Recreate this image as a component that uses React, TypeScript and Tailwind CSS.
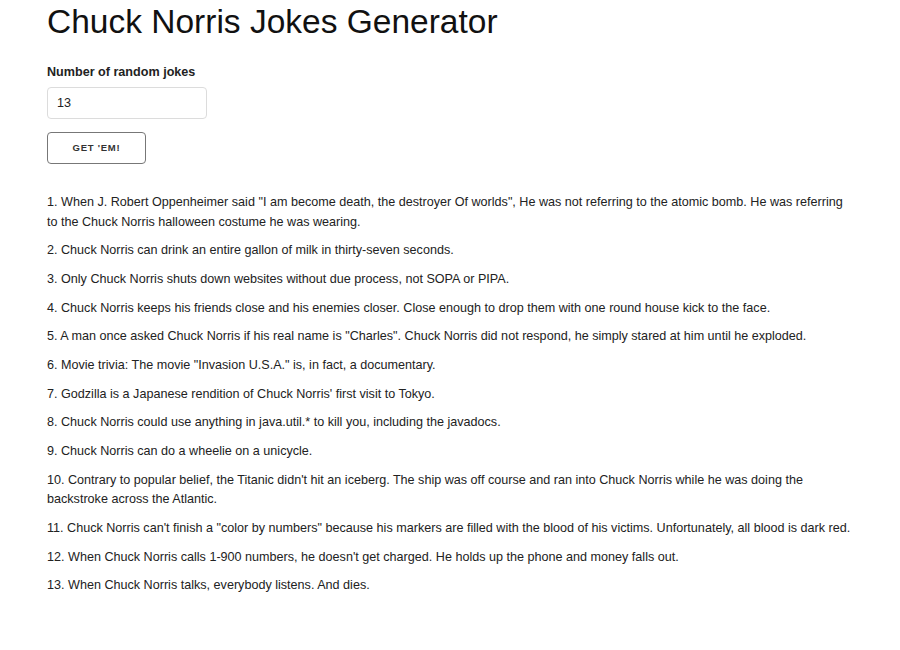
import React, { useState } from 'react';

const jokes = [
  'When J. Robert Oppenheimer said "I am become death, the destroyer Of worlds", He was not referring to the atomic bomb. He was referring to the Chuck Norris halloween costume he was wearing.',
  'Chuck Norris can drink an entire gallon of milk in thirty-seven seconds.',
  'Only Chuck Norris shuts down websites without due process, not SOPA or PIPA.',
  'Chuck Norris keeps his friends close and his enemies closer. Close enough to drop them with one round house kick to the face.',
  'A man once asked Chuck Norris if his real name is "Charles". Chuck Norris did not respond, he simply stared at him until he exploded.',
  'Movie trivia: The movie "Invasion U.S.A." is, in fact, a documentary.',
  "Godzilla is a Japanese rendition of Chuck Norris' first visit to Tokyo.",
  'Chuck Norris could use anything in java.util.* to kill you, including the javadocs.',
  'Chuck Norris can do a wheelie on a unicycle.',
  "Contrary to popular belief, the Titanic didn't hit an iceberg. The ship was off course and ran into Chuck Norris while he was doing the backstroke across the Atlantic.",
  'Chuck Norris can\'t finish a "color by numbers" because his markers are filled with the blood of his victims. Unfortunately, all blood is dark red.',
  "When Chuck Norris calls 1-900 numbers, he doesn't get charged. He holds up the phone and money falls out.",
  'When Chuck Norris talks, everybody listens. And dies.',
];

const App = () => {
  const [count, setCount] = useState('13');

  return (
    <div className="min-h-screen bg-white px-[47px] text-[#222] font-['Liberation_Sans',Arial,sans-serif]">
      <h1 className="pt-[1px] text-[33.5px] leading-[42px] font-normal text-[#111]">Chuck Norris Jokes Generator</h1>

      <form className="mt-[21px] flex flex-col items-start" onSubmit={(e) => e.preventDefault()}>
        <label className="text-[12.6px] leading-[16px] font-bold text-[#222]">Number of random jokes</label>
        <input
          value={count}
          onChange={(e) => setCount(e.target.value)}
          className="mt-[7px] h-[32px] w-[160px] rounded-[4px] border border-[#dcdcdc] px-[9px] text-[12.6px] text-[#222] outline-none"
        />
        <button
          type="submit"
          className="mt-[13px] h-[32px] w-[99px] rounded-[4px] border border-[#777] bg-white text-[9.5px] font-bold tracking-[0.08em] text-[#333]"
        >
          GET 'EM!
        </button>
      </form>

      <div className="mt-[29px]">
        {jokes.map((joke, i) => (
          <p key={i} className="mb-[9.2px] text-[12.6px] leading-[19.5px] text-[#222]">
            {i + 1}. {joke}
          </p>
        ))}
      </div>
    </div>
  );
};

export default App;
